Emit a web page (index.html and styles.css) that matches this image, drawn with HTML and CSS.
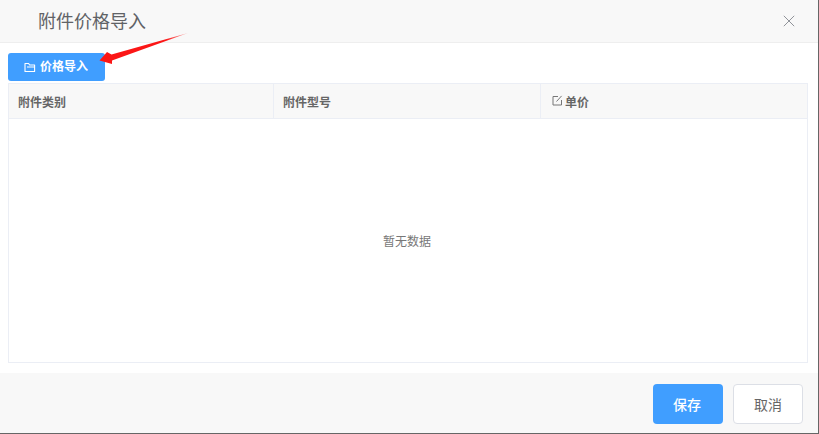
FILE: index.html
```html
<!DOCTYPE html>
<html lang="zh">
<head>
<meta charset="utf-8">
<title>附件价格导入</title>
<link rel="stylesheet" href="styles.css">
</head>
<body>
<div class="dialog">
  <header class="dialog-head">
    <h1 class="dialog-title">附件价格导入</h1>
    <button class="close" aria-label="关闭">
      <svg width="12" height="12" viewBox="0 0 12 12"><path d="M.8.8l10.4 10.4M11.2.8L.8 11.2" stroke="#909399" stroke-width="1" fill="none"/></svg>
    </button>
  </header>
  <main class="dialog-body">
    <button class="import-btn">
      <svg class="folder" width="12" height="11" viewBox="0 0 12 11"><path d="M1 1.5h3.6l1 1.5h5v6.5H1zM3 5h8" stroke="#fff" stroke-width="1.1" fill="none" stroke-linejoin="round"/></svg>
      <span class="import-label">价格导入</span>
    </button>
    <div class="table">
      <div class="thead">
        <div class="th th-a">附件类别</div>
        <div class="th th-b">附件型号</div>
        <div class="th th-c">
          <svg class="edit" width="11" height="11" viewBox="0 0 11 11"><path d="M6 1.5H1v8.5h8.5V5M4.5 6.5L9.6.9" stroke="#777" stroke-width="1" fill="none"/></svg>
          <span>单价</span>
        </div>
      </div>
      <div class="tbody">暂无数据</div>
    </div>
  </main>
  <footer class="dialog-foot">
    <button class="btn btn-primary">保存</button>
    <button class="btn btn-default">取消</button>
  </footer>
  <svg class="arrow" width="100" height="40" viewBox="0 0 100 40"><defs><linearGradient id="g" gradientUnits="userSpaceOnUse" x1="4" y1="30" x2="93" y2="3"><stop offset="0" stop-color="#fb1616"/><stop offset=".75" stop-color="#fb1616"/><stop offset="1" stop-color="#fb1616" stop-opacity=".3"/></linearGradient></defs><path d="M4.5 30.5L12 22 16.5 24.5 93 3 17 30.5 17 34z" fill="url(#g)"/></svg>
</div>
</body>
</html>
```
FILE: styles.css
```css
* { box-sizing: border-box; }
html, body { margin: 0; height: 100%; background: #fff; }
body { overflow: hidden; font-family: "Noto Sans CJK SC", "Liberation Sans", sans-serif; }
button { font-family: inherit; cursor: pointer; }

.dialog {
  position: relative;
  width: 819px;
  height: 434px;
  display: flex;
  flex-direction: column;
  border-right: 1px solid #666;
  border-bottom: 1px solid #666;
  background: #fff;
}

.dialog-head {
  height: 43px;
  flex: none;
  display: flex;
  align-items: center;
  justify-content: space-between;
  padding: 0 23px 0 38px;
  background: #f8f8f8;
  border-bottom: 1px solid #eee;
}
.dialog-title { margin: -3px 0 0; font-size: 18px; font-weight: 400; color: #606266; line-height: 42px; }
.close { width: 12px; height: 12px; padding: 0; border: 0; background: none; display: flex; margin-top: -1px; }

.dialog-body { flex: 1; padding: 10px 10px 10px 8px; display: flex; flex-direction: column; }

.import-btn {
  width: 97px;
  height: 28px;
  flex: none;
  display: flex;
  align-items: center;
  gap: 4px;
  padding: 0 0 0 16px;
  border: 0;
  border-radius: 3px;
  background: #409eff;
  color: #fff;
  font-size: 12px;
  font-weight: 700;
}
.folder { flex: none; }
.import-label { margin-top: -3px; }

.table { flex: 1; margin-top: 2px; border: 1px solid #ebeef5; display: flex; flex-direction: column; }
.thead { height: 35px; flex: none; display: flex; background: #f8f8f8; border-bottom: 1px solid #ebeef5; }
.th {
  display: flex;
  align-items: center;
  padding-left: 9px;
  font-size: 12px;
  font-weight: 700;
  color: #666;
  border-right: 1px solid #ebeef5;
}
.th-a { width: 265px; }
.th-b { width: 267px; }
.th-c { flex: 1; border-right: 0; padding-left: 11px; gap: 2px; }
.edit { flex: none; margin-top: -2px; }
.tbody { flex: 1; display: flex; align-items: center; justify-content: center; padding-right: 2px; font-size: 12px; color: #777; }

.dialog-foot {
  height: 60px;
  flex: none;
  display: flex;
  justify-content: flex-end;
  gap: 10px;
  padding: 11px 15px 9px 0;
  background: #f8f8f8;
}
.btn { width: 70px; height: 40px; border-radius: 4px; font-size: 14px; }
.btn-primary { border: 0; padding: 0 2px 0 0; background: #409eff; color: #fff; font-weight: 500; }
.btn-default { border: 1px solid #dcdfe6; background: #fff; color: #666; }

.arrow { position: absolute; left: 95px; top: 30px; }
```
